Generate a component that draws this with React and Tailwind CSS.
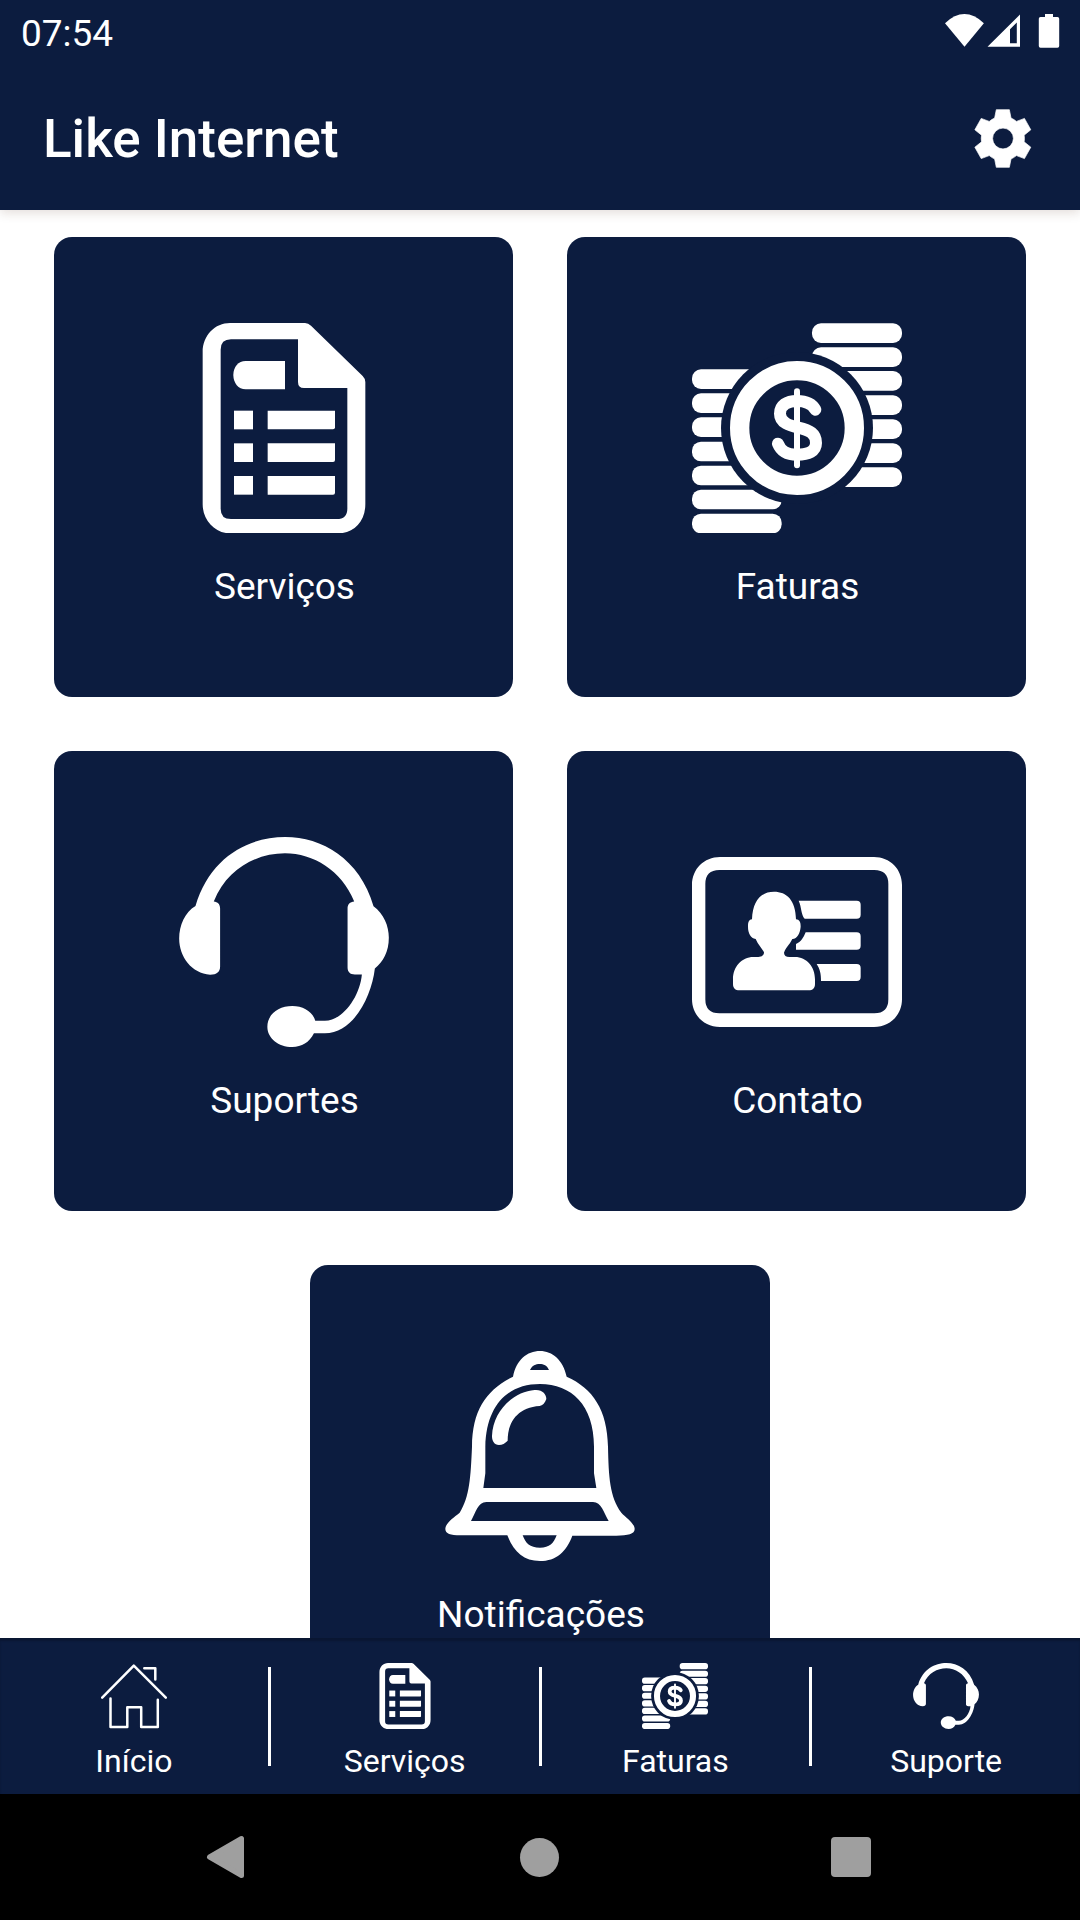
const doc = "M150 68H375Q385 68 393 76L548 227Q556 235 556 245V612C556 664 520 699 475 699H150C105 699 68 660 68 612V155C68 105 105 68 150 68ZM153 117Q122 117 122 148V625Q122 656 153 656H470Q502 656 502 625V263H372Q354 263 354 245V117Z";

function ServicesIcon({ className }) {
  return (
    <svg className={className} viewBox="-3 68 630 630" fill="white">
      <path fillRule="evenodd" d={doc} />
      <path d="M197 182H315V267H197C175 267 160 248 160 224C160 200 175 182 197 182Z" />
      {[331, 429, 527].map((y) => (
        <g key={y}>
          <rect x="162" y={y} width="57" height="56" />
          <path d={`M263 ${y}H465V${y + 50}Q465 ${y + 56} 459 ${y + 56}H263Z`} />
        </g>
      ))}
    </svg>
  );
}

const rightCoins = [69, 141, 212, 285, 357, 429, 501];
const leftCoins = [207, 279, 351, 424, 496, 568, 640];

function InvoicesIcon({ className }) {
  return (
    <svg className={className} viewBox="66 68 630 630" fill="white">
      {rightCoins.map((y) => (
        <rect key={y} x="426" y={y} width="270" height="59" rx="27" />
      ))}
      {leftCoins.map((y) => (
        <rect key={y} x="66" y={y} width="269" height="59" rx="27" />
      ))}
      <circle cx="381" cy="383" r="228" fill="#0c1c3f" />
      <circle cx="381" cy="383" r="172" fill="none" stroke="white" strokeWidth="58" />
      <g fill="none" stroke="white" strokeLinecap="round">
        <path strokeWidth="36" d="M436 328C425 308 405 302 381 302C350 302 330 315 330 340C330 368 360 376 385 382C420 390 438 400 438 428C438 453 415 463 381 463C347 463 333 452 324 430" />
        <path strokeWidth="18" d="M381 273V495" />
      </g>
    </svg>
  );
}

function SupportIcon({ className }) {
  return (
    <svg className={className} viewBox="57 50 630 631" fill="white">
      <path d="M106 257C150 110 265 50 376 50C485 50 600 115 641 258C672 280 687 318 687 352C687 395 670 425 645 445C635 530 580 640 495 640H462C448 668 425 681 397 681C355 681 322 655 322 620C322 583 355 558 397 558C430 558 458 575 466 602H495C548 602 600 530 606 463H585C570 463 563 455 563 442V265C563 252 570 246 583 244C545 150 460 99 375 99C290 99 200 145 161 244C173 246 180 252 180 265V440C180 455 170 464 150 464C95 460 57 410 57 355C57 315 75 275 106 257Z" />
    </svg>
  );
}

function ContactIcon({ className }) {
  return (
    <svg className={className} viewBox="66 51 630 630" fill="white">
      <path fillRule="evenodd" d="M150 111H612C660 111 696 147 696 195V537C696 585 660 621 612 621H150C102 621 66 585 66 537V195C66 147 102 111 150 111ZM148 150Q106 150 106 192V538Q106 580 148 580H613Q655 580 655 538V192Q655 150 613 150Z" />
      <path d="M386 242H560q12 0 12 12V284q0 12-12 12H404C393 285 395 262 386 242Z" />
      <path d="M407 337H560q12 0 12 12V377q0 12-12 12H378V372C393 366 401 352 407 337Z" />
      <path d="M440 432H560q12 0 12 12V471q0 12-12 12H453C453 462 450 447 440 432Z" />
      <path d="M312 215C350 215 377 240 378 298C388 299 392 305 392 320C390 340 382 356 367 357C358 375 348 382 342 398C342 406 348 411 358 411H375C410 411 435 440 435 478V492C435 504 428 511 416 511H208C196 511 189 504 189 492V478C189 440 215 411 250 411H265C276 411 282 405 282 397C274 382 265 375 257 357C242 354 234 340 234 320C234 305 237 299 246 298C248 240 275 215 312 215Z" />
    </svg>
  );
}

function BellIcon({ className }) {
  return (
    <svg className={className} viewBox="46 63 630 630" fill="white">
      <path fillRule="evenodd" d="M361 63C398 63 430 90 441 140C520 175 563 240 565 350C567 440 570 500 605 548C620 564 645 580 645 597C645 612 625 617 590 617H458C440 665 410 693 361 693C312 693 282 665 263 616H130C95 617 77 612 77 597C77 580 100 564 120 548C150 500 153 440 157 350C158 240 200 180 280 140C290 90 322 63 361 63ZM331 120H388C382 106 372 102 360 102C348 102 338 106 331 120ZM361 162C265 162 200 225 197 350V430L191 474H530L523 430V350C523 225 455 162 361 162ZM200 516C175 516 168 548 154 573H567C552 548 545 516 520 516ZM309 616C318 640 330 653 361 653C390 653 402 640 411 616Z" />
      <path d="M345 180C368 178 380 192 380 207C376 220 368 227 360 228C295 232 264 275 264 332C256 340 248 345 238 345C224 344 217 334 217 318C220 240 285 184 345 180Z" />
    </svg>
  );
}

function HomeIcon({ className }) {
  return (
    <svg className={className} viewBox="0 0 66 66" fill="none" stroke="white" strokeWidth="2.5" strokeLinecap="round" strokeLinejoin="round">
      <path d="M1.2 34.6L32.8 2.6L64.8 34.6" />
      <path d="M43.3 5.2H54.3V16.5" />
      <path d="M9.5 35.5V64H26.3V44.2H40.2V64H56.8V36.8" />
    </svg>
  );
}

function GearIcon({ className }) {
  return (
    <svg className={className} viewBox="222 326 172 176" fill="white" stroke="white" strokeWidth="2" strokeLinejoin="round">
      <path fillRule="evenodd" d="M288 328H327L332 353Q341 357 348 363L372 354L391 388L371 404Q373 414 371 424L391 440L372 474L348 465Q341 471 332 475L327 500H288L283 475Q274 471 267 465L243 474L224 440L244 424Q242 414 244 404L224 388L243 354L267 363Q274 357 283 353ZM308 383A31 31 0 1 0 308 445A31 31 0 1 0 308 383Z" />
    </svg>
  );
}

function StatusIcons() {
  return (
    <svg className="h-[36px] w-[116px]" viewBox="945 12 116 36" fill="white">
      <path d="M945 23.200Q964.400 5 983.900 23.200L964.500 46.700Z" />
      <path fillRule="evenodd" d="M987.500 46.800L1020 14.500V46.800ZM1010 43.300H1016.800V22.500L1010 29.300Z" />
      <path d="M1045 14H1053V17H1057.500Q1059.200 17 1059.200 18.700V46Q1059.200 47.700 1057.500 47.700H1040.500Q1038.800 47.700 1038.800 46V18.700Q1038.800 17 1040.500 17H1045Z" />
    </svg>
  );
}

function Card({ icon: Icon, label }) {
  return (
    <button className="flex h-[459.5px] w-[459.5px] flex-col items-center rounded-[18px] bg-[#0c1c3f] pt-[86px]">
      <Icon className="size-[210px] shrink-0" />
      <span className="mt-[32px] pl-[2px] text-[37px] leading-[44px]">{label}</span>
    </button>
  );
}

function Tab({ icon: Icon, label }) {
  return (
    <button className="flex flex-1 flex-col items-center pt-[25px]">
      <Icon className="size-[66px] shrink-0" />
      <span className="mt-[14px] text-[32px] leading-[37px]">{label}</span>
    </button>
  );
}

function Divider() {
  return <div className="mt-[29px] h-[99px] w-[3px] bg-white" />;
}

export default function App() {
  return (
    <div className="flex h-[1920px] w-[1080px] flex-col overflow-hidden bg-white font-['Roboto',sans-serif] text-white">
      <header className="z-10 h-[210px] shrink-0 bg-[#0c1c3f] shadow-[0_3px_10px_rgba(90,50,30,0.16)]">
        <div className="flex h-[66px] items-start justify-between pt-[12px] pr-[19px] pl-[21px]">
          <span className="text-[37px] leading-[44px]">07:54</span>
          <StatusIcons />
        </div>
        <div className="flex h-[144px] items-center justify-between pr-[48px] pl-[43px]">
          <h1 className="pt-px text-[53px] leading-[62px] font-medium">Like Internet</h1>
          <GearIcon className="h-[59px] w-[58px]" />
        </div>
      </header>

      <main className="min-h-0 flex-1 overflow-hidden">
        <div className="flex flex-wrap justify-center gap-x-[53.5px] gap-y-[54.5px] pt-[27px]">
          <Card icon={ServicesIcon} label="Serviços" />
          <Card icon={InvoicesIcon} label="Faturas" />
          <Card icon={SupportIcon} label="Suportes" />
          <Card icon={ContactIcon} label="Contato" />
          <Card icon={BellIcon} label="Notificações" />
        </div>
      </main>

      <nav className="flex h-[156px] shrink-0 bg-[#0c1c3f] shadow-[inset_0_3px_2px_rgba(0,0,0,0.2)]">
        <Tab icon={HomeIcon} label="Início" />
        <Divider />
        <Tab icon={ServicesIcon} label="Serviços" />
        <Divider />
        <Tab icon={InvoicesIcon} label="Faturas" />
        <Divider />
        <Tab icon={SupportIcon} label="Suporte" />
      </nav>

      <footer className="flex h-[126px] shrink-0 items-center justify-between bg-black pr-[209px] pl-[206px]">
        <svg className="h-[44px] w-[38px]" viewBox="0 0 38 44">
          <path d="M3.500 22L35.500 3.500V40.500Z" fill="#9f9f9f" stroke="#9f9f9f" strokeWidth="5" strokeLinejoin="round" />
        </svg>
        <div className="ml-[4px] size-[39px] rounded-full bg-[#9f9f9f]" />
        <div className="size-[40px] rounded-[4px] bg-[#9f9f9f]" />
      </footer>
    </div>
  );
}
